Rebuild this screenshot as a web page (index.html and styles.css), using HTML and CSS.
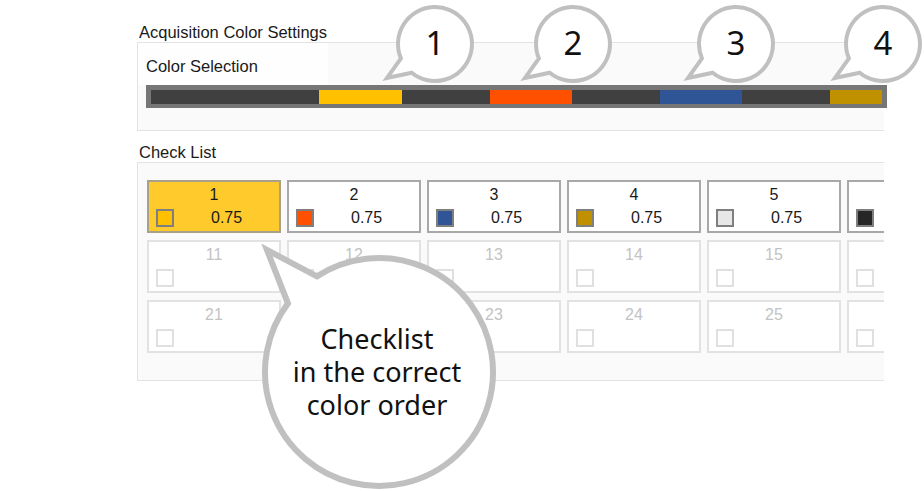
FILE: index.html
```html
<!DOCTYPE html>
<html lang="en">
<head>
<meta charset="utf-8">
<title>Acquisition Color Settings</title>
<link rel="stylesheet" href="styles.css">
</head>
<body>
<div class="page">
  <div class="section-title">Acquisition Color Settings</div>
  <div class="panel panel-color">
    <div class="sub-label">Color Selection</div>
    <div class="color-bar">
      <span class="seg seg-dark w168"></span>
      <span class="seg seg-yellow w83"></span>
      <span class="seg seg-dark w88"></span>
      <span class="seg seg-orange w82"></span>
      <span class="seg seg-dark w88"></span>
      <span class="seg seg-blue w82"></span>
      <span class="seg seg-dark w88"></span>
      <span class="seg seg-gold w52"></span>
    </div>
  </div>

  <div class="section-title title-check">Check List</div>
  <div class="panel panel-check">
    <div class="card-grid">
      <div class="card card-active"><div class="num">1</div><div class="row"><span class="box box-yellow"></span><span class="val">0.75</span></div></div>
      <div class="card"><div class="num">2</div><div class="row"><span class="box box-orange"></span><span class="val">0.75</span></div></div>
      <div class="card"><div class="num">3</div><div class="row"><span class="box box-blue"></span><span class="val">0.75</span></div></div>
      <div class="card"><div class="num">4</div><div class="row"><span class="box box-gold"></span><span class="val">0.75</span></div></div>
      <div class="card"><div class="num">5</div><div class="row"><span class="box box-light"></span><span class="val">0.75</span></div></div>
      <div class="card"><div class="num">6</div><div class="row"><span class="box box-black"></span><span class="val">0.75</span></div></div>

      <div class="card card-off"><div class="num">11</div><div class="row"><span class="box"></span></div></div>
      <div class="card card-off"><div class="num">12</div><div class="row"><span class="box"></span></div></div>
      <div class="card card-off"><div class="num">13</div><div class="row"><span class="box"></span></div></div>
      <div class="card card-off"><div class="num">14</div><div class="row"><span class="box"></span></div></div>
      <div class="card card-off"><div class="num">15</div><div class="row"><span class="box"></span></div></div>
      <div class="card card-off"><div class="num">16</div><div class="row"><span class="box"></span></div></div>

      <div class="card card-off"><div class="num">21</div><div class="row"><span class="box"></span></div></div>
      <div class="card card-off"><div class="num">22</div><div class="row"><span class="box"></span></div></div>
      <div class="card card-off"><div class="num">23</div><div class="row"><span class="box"></span></div></div>
      <div class="card card-off"><div class="num">24</div><div class="row"><span class="box"></span></div></div>
      <div class="card card-off"><div class="num">25</div><div class="row"><span class="box"></span></div></div>
      <div class="card card-off"><div class="num">26</div><div class="row"><span class="box"></span></div></div>
    </div>
  </div>
</div>

<div class="bubble-sm b1">
  <svg class="bubble-svg-sm" viewBox="0 0 100 90" width="100" height="90"><path d="M20.94 59.46 L7 79 L31.72 73.75 A37 37 0 1 0 20.94 59.46 Z"/></svg>
  <span class="bubble-num">1</span>
</div>
<div class="bubble-sm b2">
  <svg class="bubble-svg-sm" viewBox="0 0 100 90" width="100" height="90"><path d="M20.94 59.46 L7 79 L31.72 73.75 A37 37 0 1 0 20.94 59.46 Z"/></svg>
  <span class="bubble-num">2</span>
</div>
<div class="bubble-sm b3">
  <svg class="bubble-svg-sm" viewBox="0 0 100 90" width="100" height="90"><path d="M20.94 59.46 L7 79 L31.72 73.75 A37 37 0 1 0 20.94 59.46 Z"/></svg>
  <span class="bubble-num">3</span>
</div>
<div class="bubble-sm b4">
  <svg class="bubble-svg-sm" viewBox="0 0 100 90" width="100" height="90"><path d="M20.94 59.46 L7 79 L31.72 73.75 A37 37 0 1 0 20.94 59.46 Z"/></svg>
  <span class="bubble-num">4</span>
</div>

<div class="bubble-lg">
  <svg class="bubble-svg-lg" viewBox="0 0 250 249" width="250" height="249"><path d="M33.96 61.39 L13 8 L62.91 34.39 A114 114 0 1 1 33.96 61.39 Z"/></svg>
  <div class="bubble-text">Checklist<br>in the correct<br>color order</div>
</div>
</body>
</html>
```

FILE: styles.css
```css
html, body {
  margin: 0;
  padding: 0;
  background: #ffffff;
  overflow: hidden;
}
body {
  width: 924px;
  height: 491px;
  position: relative;
  font-family: "Liberation Sans", Arial, sans-serif;
  color: #1a1a1a;
}

.page {
  padding: 23px 0 0 137px;
  width: 747px;
}

.section-title {
  font-size: 16.5px;
  line-height: 19px;
  padding-left: 2px;
  color: #1a1a1a;
}
.title-check {
  margin-top: 12px;
}

.panel {
  border: 1px solid #e3e3e3;
  border-right: none;
  background: #fafafa;
}

.panel-color {
  padding: 0 0 22px 8px;
}
.sub-label {
  margin-left: -8px;
  width: 182px;
  padding: 14px 0 9px 8px;
  font-size: 16.5px;
  line-height: 19px;
  background: #fefefe;
}
.color-bar {
  display: flex;
  width: 741px;
  box-sizing: border-box;
  padding: 5px 5px 4px 5px;
  background: #767676;
}
.seg {
  display: block;
  height: 14px;
  flex: none;
}
.seg-dark { background: #404040; }
.seg-yellow { background: #ffc000; }
.seg-orange { background: #ff5000; }
.seg-blue { background: #2f5597; }
.seg-gold { background: #bf9000; }
.w168 { width: 168px; }
.w83 { width: 83px; }
.w88 { width: 88px; }
.w82 { width: 82px; }
.w52 { width: 52px; }

.panel-check {
  padding: 17px 0 27px 9px;
  overflow: hidden;
}
.card-grid {
  display: grid;
  grid-template-columns: repeat(6, 134px);
  grid-auto-rows: 53px;
  gap: 7px 6px;
}
.card {
  box-sizing: border-box;
  height: 53px;
  border: 2px solid #a8a8a8;
  background: #ffffff;
  padding: 4px 7px 0 7px;
  font-size: 16px;
}
.card-active {
  background: #ffca2c;
  border-color: #a9a08a;
}
.num {
  text-align: center;
  line-height: 18px;
  height: 18px;
}
.row {
  display: flex;
  align-items: center;
  height: 18px;
  margin-top: 5px;
}
.box {
  display: block;
  box-sizing: border-box;
  width: 18px;
  height: 18px;
  border: 2px solid #7f7f7f;
  flex: none;
}
.box-yellow { background: #ffc000; }
.box-orange { background: #ff5000; }
.box-blue { background: #2f5597; }
.box-gold { background: #bf9000; }
.box-light { background: #e7e7e7; }
.box-black { background: #262626; }
.val {
  margin-left: 37px;
  line-height: 18px;
}

.card-off {
  border-color: #e2e2e2;
  color: #c3c3c3;
}
.card-off .box {
  border-color: #e0e0e0;
  background: #ffffff;
}

/* callout bubbles (overlays) */
.bubble-sm {
  position: absolute;
  top: 7px;
  width: 74px;
  height: 74px;
  display: flex;
  align-items: center;
  justify-content: center;
}
.b1 { left: 398px; }
.b2 { left: 536px; }
.b3 { left: 699px; }
.b4 { left: 846px; }
.bubble-svg-sm {
  position: absolute;
  left: -18px;
  top: -8px;
  overflow: visible;
}
.bubble-svg-sm path,
.bubble-svg-lg path {
  fill: #ffffff;
  stroke: #c0c0c0;
  stroke-linejoin: miter;
  stroke-miterlimit: 8;
}
.bubble-svg-sm path { stroke-width: 4; }
.bubble-svg-lg path { stroke-width: 6; }
.bubble-num {
  position: relative;
  font-family: "Noto Sans", "Open Sans", sans-serif;
  font-size: 33px;
  line-height: 33px;
  color: #111111;
  margin-top: -3px;
}

.bubble-lg {
  position: absolute;
  left: 254px;
  top: 242px;
  width: 250px;
  height: 249px;
}
.bubble-svg-lg {
  position: absolute;
  left: 0;
  top: 0;
  overflow: visible;
}
.bubble-text {
  position: absolute;
  left: 0;
  top: 80px;
  width: 246px;
  text-align: center;
  font-family: "Noto Sans", "Open Sans", sans-serif;
  font-size: 27px;
  line-height: 33px;
  color: #111111;
}
```
